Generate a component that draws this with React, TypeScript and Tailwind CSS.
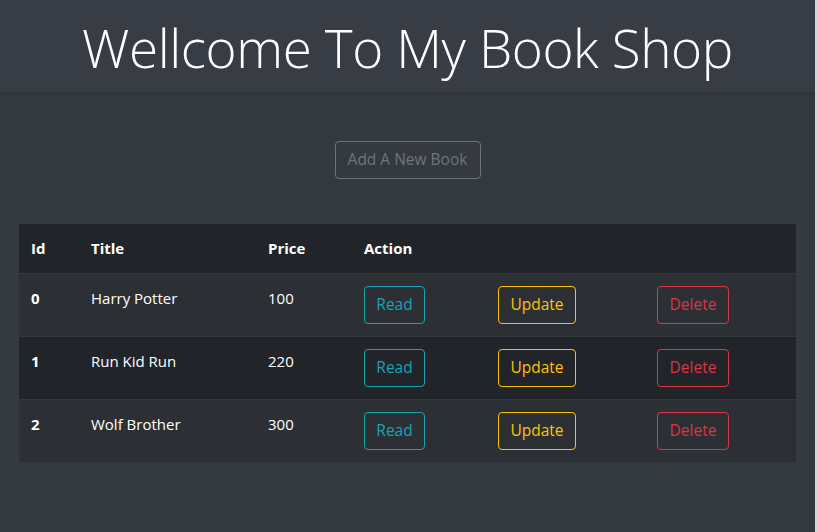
import React from "react";

const books = [
  { id: 0, title: "Harry Potter", price: 100 },
  { id: 1, title: "Run Kid Run", price: 220 },
  { id: 2, title: "Wolf Brother", price: 300 },
];

export default function App() {
  return (
    <div className="flex h-[532px] w-[818px] bg-[#343a40]" style={{ fontFamily: '"Open Sans", "Noto Sans", sans-serif' }}>
      <div className="flex w-[815px] flex-col">
        <header className="flex h-[92px] items-center justify-center bg-[#383d45] shadow-[0_2px_3px_rgba(0,0,0,0.12)]">
          <h1 className="pt-[2px] text-[53px] font-light leading-none tracking-[-0.4px] text-white">Wellcome To My Book Shop</h1>
        </header>
        <div className="flex justify-center pt-[49px]">
          <button className="h-[38px] w-[146px] rounded-[4px] border border-[#6c757d] text-[15.5px] text-[#6c757d]">
            Add A New Book
          </button>
        </div>
        <div className="px-[19px] pt-[45px]">
          <table className="w-full border-collapse text-[15px] text-white">
            <thead>
              <tr className="h-[49px] bg-[#212529] text-left">
                <th className="w-[60px] px-3 align-middle font-bold">Id</th>
                <th className="w-[177px] px-3 font-bold">Title</th>
                <th className="w-[96px] px-3 font-bold">Price</th>
                <th className="w-[134px] px-3 font-bold">Action</th>
                <th className="w-[159px] px-3"></th>
                <th className="px-3"></th>
              </tr>
            </thead>
            <tbody>
              {books.map((b, i) => (
                <tr key={b.id} className={`h-[63px] border-t border-[#32383e] ${i % 2 === 0 ? "bg-[#2c3034]" : "bg-[#212529]"}`}>
                  <td className="px-3 pt-[13px] align-top font-bold">{b.id}</td>
                  <td className="px-3 pt-[13px] align-top">{b.title}</td>
                  <td className="px-3 pt-[13px] align-top">{b.price}</td>
                  <td className="px-3 align-middle">
                    <button className="h-[38px] w-[61px] rounded-[4px] border border-[#17a2b8] text-[15.5px] text-[#17a2b8]">Read</button>
                  </td>
                  <td className="px-3 align-middle">
                    <button className="h-[38px] w-[78px] rounded-[4px] border border-[#ffc107] text-[15.5px] text-[#ffc107]">Update</button>
                  </td>
                  <td className="px-3 align-middle">
                    <button className="h-[38px] w-[72px] rounded-[4px] border border-[#dc3545] text-[15.5px] text-[#dc3545]">Delete</button>
                  </td>
                </tr>
              ))}
            </tbody>
          </table>
        </div>
      </div>
      <div className="w-[3px] bg-[#d4d4d4]"></div>
    </div>
  );
}
